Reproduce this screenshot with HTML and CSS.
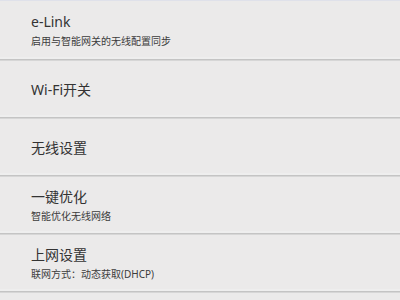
FILE: index.html
```html
<!DOCTYPE html>
<html lang="zh-CN">
<head>
<meta charset="utf-8">
<link rel="stylesheet" href="styles.css">
</head>
<body>
<div class="topline"></div>
<ul class="list">
  <li class="item item-first">
    <div class="title">e-Link</div>
    <div class="sub">启用与智能网关的无线配置同步</div>
  </li>
  <li class="item">
    <div class="title">Wi-Fi开关</div>
  </li>
  <li class="item">
    <div class="title">无线设置</div>
  </li>
  <li class="item">
    <div class="title">一键优化</div>
    <div class="sub">智能优化无线网络</div>
  </li>
  <li class="item">
    <div class="title">上网设置</div>
    <div class="sub">联网方式：动态获取(DHCP)</div>
  </li>
</ul>
</body>
</html>
```
FILE: styles.css
```css
html, body {
  margin: 0;
  padding: 0;
  background: #ebeaea;
  font-family: "Noto Sans", "Noto Sans CJK SC", sans-serif;
}
.topline {
  height: 1px;
  background: #dfe1ea;
}
.list {
  list-style: none;
  margin: 0;
  padding: 0;
}
.item {
  box-sizing: border-box;
  height: 57px;
  padding: 1px 0 0 31px;
  display: flex;
  flex-direction: column;
  justify-content: center;
  border-bottom: 1px solid #c4c4c4;
  box-shadow: inset 0 -2px 0 #eeeeee, 0 1px 0 #d6d6d6;
  margin-bottom: 1px;
}
.item-first {
  height: 59px;
  padding-top: 0;
}
.title {
  font-size: 14px;
  line-height: 18px;
  color: #333333;
}
.sub {
  font-size: 10px;
  line-height: 14px;
  margin-top: 3px;
  color: #3c3c3c;
}
```
